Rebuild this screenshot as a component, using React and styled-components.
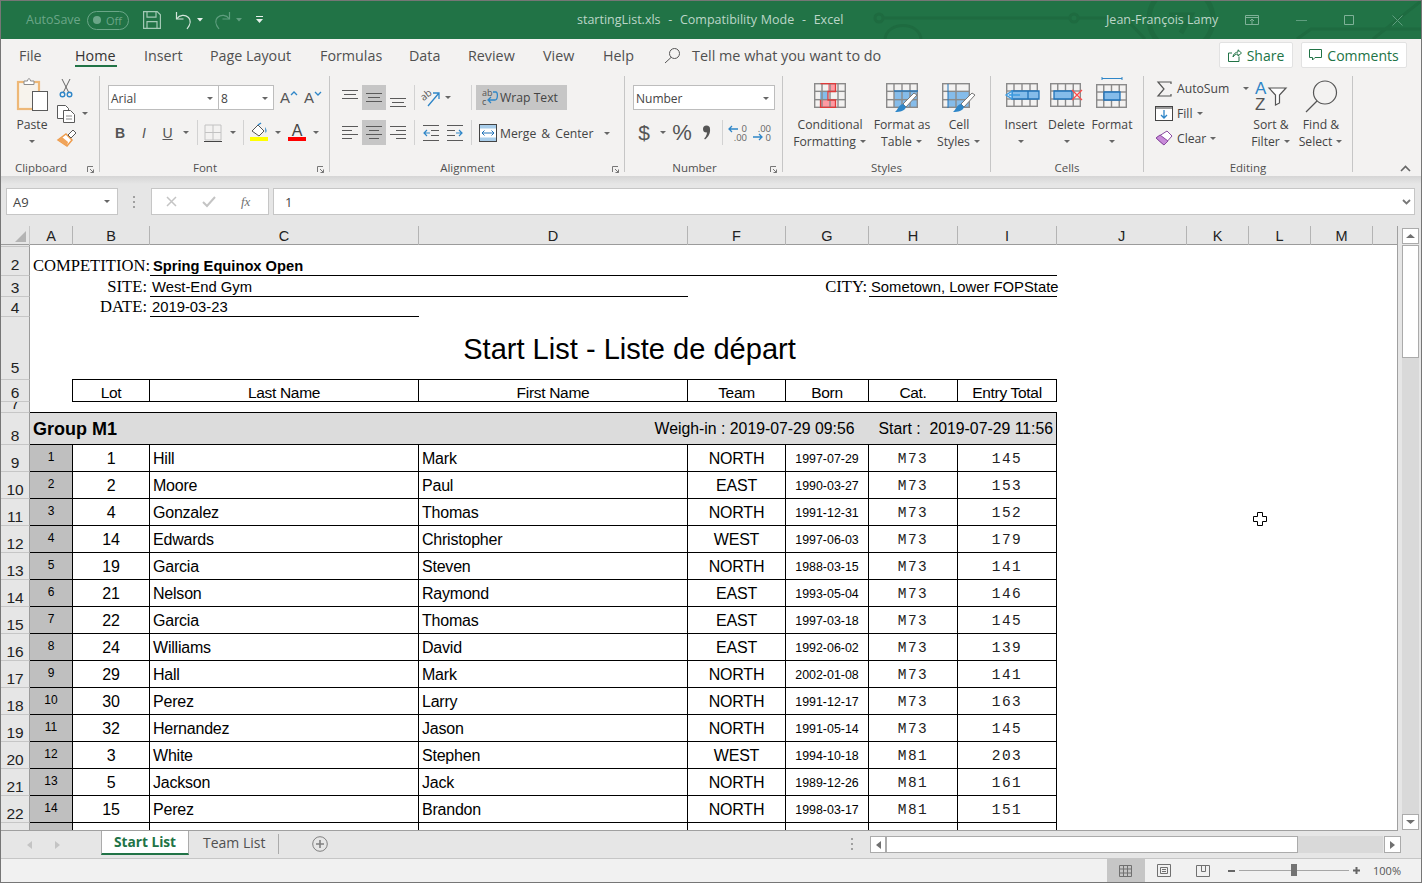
import styled, { createGlobalStyle } from 'styled-components'

const UI = `"Open Sans", "Noto Sans", sans-serif`
const ARIAL = `"Liberation Sans", Arial, sans-serif`

const GlobalStyle = createGlobalStyle`
  html, body { margin: 0; height: 100%; overflow: hidden; background: #fff; }
  #root { height: 100%; }
  * { box-sizing: border-box; }
  svg { display: block; flex: none; overflow: visible; }
`

const Window = styled.div`
  position: relative;
  height: 100vh;
  border: 1px solid #767676;
  display: flex;
  flex-direction: column;
  overflow: hidden;
  font-family: ${UI};
  background: #f3f2f1;
`

/* ---------- title bar ---------- */
const TitleBar = styled.div`
  position: relative;
  height: 38px;
  flex: none;
  background: #217346;
  display: flex;
  align-items: center;
  font-size: 12.5px;
  color: #bcd6c8;
`
const Circuit = styled.svg`
  position: absolute;
  left: 0;
  top: 0;
  overflow: hidden;
`
const QuickAccess = styled.div`
  position: relative;
  display: flex;
  flex: none;
  align-items: center;
  padding-left: 25px;
  width: 576px;
`
const AutoSave = styled.span`
  color: #6ba688;
  width: 61px;
  margin-top: -2px;
`
const Toggle = styled.span`
  width: 42px;
  height: 19px;
  border: 1px solid #6ba688;
  border-radius: 10px;
  display: flex;
  align-items: center;
  justify-content: space-between;
  padding: 0 6px 0 5px;
  color: #6ba688;
  font-size: 11px;
  margin-right: 14px;
  &::before {
    content: '';
    width: 8px;
    height: 8px;
    border-radius: 50%;
    background: #6ba688;
  }
`
const QuickTool = styled.span`
  width: ${({ $w }) => $w}px;
  display: flex;
  justify-content: center;
  align-items: center;
`
const DocTitle = styled.span`
  position: relative;
  flex: none;
  width: 529px;
  margin-top: -2px;
  white-space: pre;
  word-spacing: 0.6px;
`
const UserName = styled.span`
  position: relative;
  flex: none;
  width: 139px;
  margin-top: -2px;
`
const DisplayBtn = styled.span`
  position: relative;
  flex: none;
  width: 14px;
  margin-right: 18px;
`
const WindowBtn = styled.span`
  position: relative;
  flex: none;
  width: 48px;
  display: flex;
  justify-content: center;
`

/* ---------- ribbon tabs ---------- */
const TabsRow = styled.div`
  height: 33px;
  flex: none;
  display: flex;
  align-items: center;
  padding-left: 18px;
  font-size: 14.3px;
  color: #505050;
`
const RibbonTab = styled.span`
  position: relative;
  width: ${({ $w }) => $w}px;
  flex: none;
  color: ${({ $active }) => ($active ? '#333' : '#505050')};
  line-height: 32px;
  white-space: nowrap;
  &::after {
    content: '';
    display: ${({ $active }) => ($active ? 'block' : 'none')};
    position: absolute;
    left: 0;
    width: 42px;
    bottom: 5px;
    height: 2px;
    background: #217346;
  }
`
const TellMe = styled.span`
  display: flex;
  align-items: center;
  gap: 11px;
  white-space: nowrap;
  font-size: 14.4px;
  margin-top: -1px;
`
const Spacer = styled.span`
  flex: 1;
`
const ShareButton = styled.span`
  width: ${({ $w }) => $w}px;
  height: 26px;
  margin-right: ${({ $mr }) => $mr}px;
  margin-top: -1px;
  background: #fff;
  border: 1px solid #e2e2e2;
  border-radius: 2px;
  color: #217346;
  display: flex;
  align-items: center;
  justify-content: center;
  gap: 5px;
  font-size: 14px;
  font-weight: 500;
`

/* ---------- ribbon ---------- */
const Ribbon = styled.div`
  height: 104px;
  flex: none;
  display: flex;
  padding-top: 4px;
  padding-bottom: 4px;
  position: relative;
  font-size: 12.2px;
  color: #444;
`
const Group = styled.section`
  width: ${({ $w }) => $w}px;
  flex: none;
  border-right: 1px solid #c6c6c6;
  display: grid;
  grid-template-rows: 84px 12px;
  position: relative;
`
const GroupBody = styled.div`
  display: flex;
  padding-left: ${({ $pl }) => $pl || 0}px;
  align-items: flex-start;
`
const GroupLabel = styled.div`
  display: flex;
  justify-content: center;
  padding-right: ${({ $pr }) => $pr || 0}px;
  line-height: 16px;
  height: 12px;
  font-size: 11.5px;
  color: #505050;
`
const Launcher = styled.span`
  position: absolute;
  right: 5px;
  bottom: -1px;
`
const TwoRows = styled.div`
  display: flex;
  flex-direction: column;
  gap: 10px;
  padding-top: 9px;
`
const ToolRow = styled.div`
  display: flex;
  height: 25px;
  align-items: center;
`
const Tool = styled.span`
  width: ${({ $w }) => $w}px;
  height: 25px;
  margin-left: ${({ $ml }) => $ml || 0}px;
  flex: none;
  display: flex;
  align-items: center;
  justify-content: center;
  background: ${({ $on }) => ($on ? '#c6c6c6' : 'transparent')};
`
const Caret = styled.span`
  width: ${({ $w }) => $w || 8}px;
  height: ${({ $h }) => $h || 10}px;
  flex: none;
  margin-left: ${({ $ml }) => $ml || 0}px;
  display: inline-flex;
  align-items: center;
  justify-content: center;
  &::before {
    content: '';
    border-left: 3px solid transparent;
    border-right: 3px solid transparent;
    border-top: 3px solid #666;
  }
`
const VSep = styled.span`
  width: 1px;
  height: 25px;
  flex: none;
  margin-left: ${({ $ml }) => $ml || 0}px;
  background: #d2d2d2;
`
const Combo = styled.span`
  width: ${({ $w }) => $w}px;
  height: 25px;
  flex: none;
  margin-left: ${({ $ml }) => $ml || 0}px;
  background: #fff;
  border: 1px solid #bdbdbd;
  display: flex;
  align-items: center;
  justify-content: space-between;
  padding: 1px 4px 0 2px;
  font-size: 12px;
  color: #444;
`
const WrapButton = styled.span`
  width: 91px;
  height: 25px;
  margin-left: 4px;
  background: #c6c6c6;
  display: flex;
  align-items: center;
  padding-left: 5px;
  gap: 1px;
  white-space: nowrap;
`
const MergeButton = styled.span`
  display: flex;
  align-items: center;
  margin-left: 7px;
  gap: 3px;
  white-space: nowrap;
  word-spacing: 1.9px;
  padding-top: 1px;
`
const LargeButton = styled.div`
  width: ${({ $w }) => $w}px;
  flex: none;
  display: flex;
  flex-direction: column;
  align-items: center;
  line-height: 17px;
  text-align: center;
  white-space: nowrap;
`
const LargeIcon = styled.div`
  height: 40px;
  display: flex;
  align-items: flex-start;
  padding-top: ${({ $pt }) => $pt || 0}px;
`
const LabelLine = styled.span`
  display: flex;
  align-items: center;
  height: 17px;
  gap: 3px;
`
const SmallColumn = styled.div`
  width: ${({ $w }) => $w}px;
  flex: none;
  margin-left: ${({ $ml }) => $ml || 0}px;
  display: flex;
  flex-direction: column;
`
const SmallRow = styled.div`
  height: 25px;
  display: flex;
  align-items: center;
  gap: 4px;
  white-space: nowrap;
`
const Collapse = styled.span`
  position: absolute;
  right: 10px;
  bottom: 4px;
`

/* ---------- formula bar ---------- */
const FormulaBar = styled.div`
  height: 50px;
  flex: none;
  padding: 12px 6px 11px 5px;
  display: flex;
  background: linear-gradient(#d5d5d5, #e6e6e6 8px);
  font-size: 13px;
  color: #444;
`
const FormulaBox = styled.div`
  width: ${({ $w }) => ($w ? `${$w}px` : 'auto')};
  flex: ${({ $w }) => ($w ? 'none' : '1')};
  margin-left: ${({ $ml }) => $ml || 0}px;
  background: #fff;
  border: 1px solid #c6c6c6;
  display: flex;
  align-items: center;
  justify-content: space-between;
  padding: 0 ${({ $pr }) => $pr || 0}px 0 ${({ $pl }) => $pl || 0}px;
`
const Grip = styled.span`
  width: 2px;
  height: 12px;
  margin-left: 15px;
  background: repeating-linear-gradient(#a0a0a0 0 2px, transparent 2px 5px);
  align-self: center;
`

/* ---------- sheet ---------- */
const COLUMNS = '29px 43px 77px 269px 269px 98px 83px 89px 99px 1fr'

const SheetArea = styled.div`
  flex: 1;
  min-height: 0;
  display: flex;
  background: #e6e6e6;
`
const Sheet = styled.div`
  width: 1397px;
  flex: none;
  display: flex;
  flex-direction: column;
  overflow: hidden;
  border-right: 1px solid #a0a0a0;
  border-bottom: 1px solid #a0a0a0;
`
const HeaderRow = styled.div`
  height: 19px;
  flex: none;
  display: grid;
  grid-template-columns: 29px 43px 77px 269px 269px 98px 83px 89px 99px 130px 62px 62px 62px 1fr;
  background: #e6e6e6;
  border-bottom: 1px solid #9b9b9b;
  font: 14.5px/20px ${ARIAL};
  color: #222;
`
const Corner = styled.div`
  display: flex;
  justify-content: flex-end;
  padding: 5px 3px 0 0;
  border-right: 1px solid #c6c6c6;
`
const ColHead = styled.div`
  text-align: center;
  border-right: ${({ $last }) => ($last ? '0' : '1px solid #b4b4b4')};
`
const Rows = styled.div`
  flex: 1;
  min-height: 0;
  background: #fff;
  overflow: hidden;
`
const Row = styled.div`
  height: ${({ $h }) => $h}px;
  display: grid;
  grid-template-columns: ${COLUMNS};
  grid-template-rows: ${({ $h }) => $h}px;
  font: 16px/${({ $h }) => $h}px ${ARIAL};
  letter-spacing: -0.22px;
  color: #000;
  overflow: ${({ $open }) => ($open ? 'visible' : 'hidden')};
`
const RowHead = styled.div`
  background: #e6e6e6;
  border-right: 1px solid #9b9b9b;
  border-bottom: 1px solid #c6c6c6;
  display: flex;
  align-items: flex-end;
  justify-content: center;
  padding-bottom: ${({ $lift }) => $lift || 0}px;
  font: 15.5px/16px ${ARIAL};
  letter-spacing: 0;
  color: #222;
  overflow: hidden;
`
const MetaLabel = styled.div`
  grid-column: ${({ $span }) => $span};
  text-align: right;
  font-family: "Liberation Serif", "Times New Roman", serif;
  font-size: 16.6px;
  letter-spacing: 0;
  padding-right: ${({ $pr }) => $pr}px;
  align-self: end;
  line-height: 20px;
  white-space: nowrap;
`
const MetaValue = styled.div`
  grid-column: ${({ $span }) => $span};
  border-bottom: 1px solid #000;
  padding-left: ${({ $pl }) => $pl || 2}px;
  font-weight: ${({ $bold }) => ($bold ? 700 : 400)};
  font-size: ${({ $bold }) => ($bold ? '14.7px' : '14.8px')};
  letter-spacing: 0;
  line-height: 18px;
  white-space: nowrap;
  height: 100%;
  display: flex;
  align-items: flex-end;
`
const TitleCell = styled.div`
  grid-column: 2 / 11;
  text-align: center;
  padding-right: 168px;
  font-size: 29.05px;
  line-height: 65px;
  letter-spacing: 0;
`
const ColumnTitle = styled.div`
  text-align: center;
  border-top: 1px solid #000;
  border-bottom: 1px solid #000;
  border-right: 1px solid #000;
  border-left: ${({ $first }) => ($first ? '1px solid #000' : '0')};
  margin-left: ${({ $first }) => ($first ? '-1px' : '0')};
  margin-top: -1px;
  line-height: 25px;
  height: 23px;
  font-size: 15.5px;
  letter-spacing: -0.3px;
  overflow: hidden;
`
const GroupBand = styled.div`
  grid-column: 2 / 10;
  background: #dcdcdc;
  border-bottom: 1px solid #000;
  border-right: 1px solid #000;
  display: flex;
  justify-content: space-between;
  padding: 0 3px;
  letter-spacing: 0;
`
const GroupName = styled.span`
  font-weight: 700;
  font-size: 18px;
  line-height: 32px;
`
const GroupTimes = styled.span`
  display: flex;
  gap: 24px;
  line-height: 31px;
  font-size: 15.8px;
  white-space: pre;
`
const Cell = styled.div`
  border-right: 1px solid #000;
  border-bottom: 1px solid #000;
  text-align: ${({ $left }) => ($left ? 'left' : 'center')};
  padding-left: ${({ $left }) => ($left ? '3px' : '0')};
  overflow: hidden;
  white-space: nowrap;
`
const OrderCell = styled(Cell)`
  background: #bfbfbf;
  font-size: 12px;
  letter-spacing: 0;
  line-height: 25px;
`
const DateCell = styled(Cell)`
  font-size: 12.4px;
  letter-spacing: 0;
  line-height: 28px;
`
const MonoCell = styled(Cell)`
  font-family: "Liberation Mono", "Courier New", monospace;
  font-size: 14.5px;
  letter-spacing: 1.5px;
  line-height: 29px;
  color: #222;
`
const RowFill = styled.div`
  grid-column: ${({ $span }) => $span};
  border-bottom: 1px solid #000;
`

/* ---------- scrollbars ---------- */
const VScroll = styled.div`
  flex: 1;
  display: flex;
  flex-direction: column;
  padding: 2px 3px 1px 4px;
`
const ScrollBtn = styled.div`
  width: ${({ $w }) => $w || 17}px;
  height: ${({ $h }) => $h || 16}px;
  flex: none;
  background: #fff;
  border: 1px solid #ababab;
  display: flex;
  align-items: center;
  justify-content: center;
`
const VThumb = styled.div`
  height: 113px;
  flex: none;
  margin-top: 1px;
  background: #fff;
  border: 1px solid #ababab;
`
const VTrack = styled.div`
  flex: 1;
  background: #d9d9d9;
`
const SheetTabs = styled.div`
  height: 28px;
  flex: none;
  background: #e6e6e6;
  border-bottom: 1px solid #c6c6c6;
  display: flex;
  align-items: flex-start;
  font-size: 14px;
`
const NavArrows = styled.div`
  width: 100px;
  height: 27px;
  display: flex;
  align-items: center;
  gap: 23px;
  padding-left: 26px;
  flex: none;
`
const ActiveTab = styled.div`
  width: 88px;
  height: 24px;
  background: #fff;
  border-left: 1px solid #ababab;
  border-right: 1px solid #ababab;
  border-bottom: 2px solid #217346;
  color: #217346;
  font-weight: 700;
  text-align: center;
  line-height: 21px;
  font-size: 13.7px;
`
const IdleTab = styled.div`
  width: 90px;
  height: 20px;
  margin-top: 3px;
  border-right: 1px solid #ababab;
  padding-left: 14px;
  line-height: 18px;
  color: #505050;
`
const AddSheet = styled.div`
  margin: 5px 0 0 33px;
`
const Dots = styled.div`
  margin: 7px 0 0 auto;
  width: 2px;
  height: 12px;
  background: repeating-linear-gradient(#a0a0a0 0 2px, transparent 2px 5px);
`
const HScroll = styled.div`
  width: 530px;
  margin: 5px 21px 0 17px;
  height: 17px;
  display: flex;
`
const HThumb = styled.div`
  width: 412px;
  flex: none;
  background: #fff;
  border: 1px solid #ababab;
`
const HTrack = styled.div`
  width: 85px;
  flex: none;
  background: #d9d9d9;
  margin-right: 1px;
`
const StatusBar = styled.div`
  height: 23px;
  flex: none;
  background: #f1f1f1;
  display: flex;
  justify-content: flex-end;
  align-items: center;
  padding-right: 20px;
  font-size: 11px;
  color: #555;
`
const ViewBtn = styled.div`
  width: 38.5px;
  height: 100%;
  display: flex;
  align-items: center;
  justify-content: center;
  background: ${({ $on }) => ($on ? '#c6c6c6' : 'transparent')};
`
const ZoomSlider = styled.div`
  position: relative;
  width: 110px;
  height: 1px;
  margin: 0 4px;
  background: #a6a6a6;
  &::after {
    content: '';
    position: absolute;
    left: 52px;
    top: -6px;
    width: 6px;
    height: 12px;
    background: #737373;
  }
`
const ZoomText = styled.span`
  margin-left: 13px;
`
const CellCursor = styled.svg`
  position: absolute;
  left: 1251px;
  top: 510px;
`

/* ---------- drawings ---------- */
const G = '#5a5a5a'
const BLUE = '#2e86c8'

const LinesIcon = ({ lines }) => (
  <svg width="16" height="20" viewBox="0 0 16 20" stroke={G} strokeWidth="1">
    {lines.map(([a, b, y]) => <line key={y} x1={a} x2={b} y1={y + 0.5} y2={y + 0.5} />)}
  </svg>
)
const TableGlyph = ({ x = 0, y = 0, w = 32, h = 24, cols = 4, rows = 3 }) => (
  <g stroke="#8a8a8a" strokeWidth="1.4" fill="none">
    <rect x={x + 0.7} y={y + 0.7} width={w - 1.4} height={h - 1.4} />
    {Array.from({ length: cols - 1 }, (_, i) => (
      <line key={i} x1={x + (w * (i + 1)) / cols} x2={x + (w * (i + 1)) / cols} y1={y} y2={y + h} />
    ))}
    {Array.from({ length: rows - 1 }, (_, i) => (
      <line key={i} y1={y + (h * (i + 1)) / rows} y2={y + (h * (i + 1)) / rows} x1={x} x2={x + w} />
    ))}
  </g>
)
const Brush = ({ x, y }) => (
  <g transform={`translate(${x} ${y})`}>
    <path d="M19 1l3 2-11 12-3-3z" fill="#fff" stroke="#777" />
    <path d="M8 12l3 3c-1 4-6 5-11 5 3-2 3-7 8-8z" fill="#2e86c8" />
  </g>
)

const SaveIcon = () => (
  <svg width="18" height="18" viewBox="0 0 18 18" fill="none" stroke="#a3c9b5" strokeWidth="1.2">
    <path d="M.6.6h13.6l3.2 3.2v13.6H.6z" />
    <path d="M4 .6v5.6h9V.6M4 17.4v-6.8h10v6.8" />
  </svg>
)
const UndoIcon = ({ color, flip }) => (
  <svg width="17" height="19" viewBox="0 0 17 19" fill="none" stroke={color} strokeWidth="1.2" style={flip ? { transform: 'scaleX(-1)' } : undefined}>
    <path d="M1.5 1v7h7" />
    <path d="M1.5 8C5 3.5 10 3.5 13.5 6.5c3 3 2 7-1.5 11.5" />
  </svg>
)
const WhiteCaret = () => (
  <svg width="6" height="4" viewBox="0 0 6 4" fill="#e6f0eb"><path d="M0 0h6L3 3.5z" /></svg>
)
const PasteIcon = () => (
  <svg width="33" height="36" viewBox="0 0 33 36">
    <rect x="2" y="4" width="21" height="27" fill="#f7f3ec" stroke="#eeb877" strokeWidth="2.2" />
    <path d="M8 5V3h3.5c0-3 3-3 3 0H18v3.5H8z" fill="#fff" stroke="#8c8c8c" />
    <rect x="16.5" y="13.5" width="15" height="19" fill="#fff" stroke="#5a5a5a" />
  </svg>
)
const CutIcon = () => (
  <svg width="14" height="19" viewBox="0 0 14 19" fill="none">
    <path d="M3 0l6.5 13M11 0L4.5 13" stroke="#666" />
    <circle cx="3.5" cy="15.5" r="2.3" stroke="#2e86c8" strokeWidth="1.4" />
    <circle cx="10.5" cy="15.5" r="2.3" stroke="#2e86c8" strokeWidth="1.4" />
  </svg>
)
const CopyIcon = () => (
  <svg width="18" height="18" viewBox="0 0 18 18" fill="#fff" stroke="#5a5a5a">
    <path d="M.5.5h8l3 3v10h-11z" />
    <path d="M6.5 5.5h7l4 4v8h-11z" />
    <path d="M9 11h6M9 14h6" stroke="#8a8a8a" />
  </svg>
)
const PainterIcon = () => (
  <svg width="19" height="17" viewBox="0 0 19 17">
    <path d="M9 4l6 6-5 6-9-6z" fill="#fff" stroke="#ee9c4c" strokeWidth="1.5" />
    <path d="M1 10l9 6 1-4-6-5z" fill="#f0a45a" />
    <path d="M11 5l5-5 3 3-5 5z" fill="#fff" stroke="#5a5a5a" />
  </svg>
)
const Launch = () => (
  <svg width="7" height="7" viewBox="0 0 7 7" fill="none" stroke="#777">
    <path d="M.5 6V.5H6M3 3l3.5 3.5M3.5 6.5h3v-3" />
  </svg>
)
const BigA = styled.span`
  font: 15px/1 ${ARIAL};
  color: #555;
`
const GrowIcon = ({ down }) => (
  <svg width="8" height="5" viewBox="0 0 8 5" fill="none" stroke={BLUE} strokeWidth="1.3" style={{ alignSelf: 'flex-start', marginTop: 6 }}>
    <path d={down ? 'M1 1l3 3 3-3' : 'M1 4l3-3 3 3'} />
  </svg>
)
const LetterTool = styled.span`
  font: ${({ $style }) => $style} ${ARIAL};
  color: #555;
  text-decoration: ${({ $under }) => ($under ? 'underline' : 'none')};
`
const BordersIcon = () => (
  <svg width="18" height="18" viewBox="0 0 18 18" fill="none">
    <path d="M1 1h16v15H1zM9 1v15M1 8.5h16" stroke="#c2c2c2" />
    <path d="M0 17.5h18" stroke="#444" />
  </svg>
)
const FillIcon = () => (
  <svg width="18" height="19" viewBox="0 0 18 19" fill="none">
    <path d="M2 8l6-6 6 6-5 5z" stroke="#555" fill="#fff" />
    <path d="M8 2l3-2" stroke={BLUE} strokeWidth="1.5" />
    <path d="M15 4c2 3 2 5 .5 6z" fill={BLUE} />
    <rect y="14" width="18" height="4" fill="#ffff00" />
  </svg>
)
const FontColorIcon = () => (
  <svg width="18" height="19" viewBox="0 0 18 19">
    <text x="9" y="13" fontFamily={ARIAL} fontSize="16" fill="#444" textAnchor="middle">A</text>
    <rect y="14" width="18" height="4" fill="#ff0000" />
  </svg>
)
const OrientIcon = () => (
  <svg width="19" height="19" viewBox="0 0 19 19">
    <text x="0" y="11" fontFamily={UI} fontSize="10" fill="#555" transform="rotate(-38 4 10)">ab</text>
    <path d="M6 18L17 5M11 5h6v6" fill="none" stroke={BLUE} strokeWidth="1.3" />
  </svg>
)
const IndentIcon = ({ flip }) => (
  <svg width="16" height="16" viewBox="0 0 16 16" fill="none" stroke={G} style={flip ? { transform: 'scaleX(-1)' } : undefined}>
    <path d="M0 .5h16M8 5.5h8M8 10.5h8M0 15.5h16" />
    <path d="M7 8H1M4 5L1 8l3 3" stroke={BLUE} strokeWidth="1.2" />
  </svg>
)
const WrapIcon = () => (
  <svg width="18" height="19" viewBox="0 0 18 19">
    <text x="1" y="8" fontFamily={UI} fontSize="9" fill="#555">ab</text>
    <text x="1" y="17" fontFamily={UI} fontSize="9" fill="#555">c</text>
    <path d="M12 4h3c2 0 2 8-1 8H8M10 9l-3 3 3 3" fill="none" stroke={BLUE} strokeWidth="1.3" />
  </svg>
)
const MergeIcon = () => (
  <svg width="18" height="18" viewBox="0 0 18 18" fill="none">
    <rect x=".5" y=".5" width="17" height="17" stroke="#444" fill="#fff" />
    <path d="M1 1h16v3.5H1zM1 13.5h16V17H1z" fill="#a8cdea" />
    <path d="M3 9h12M5.5 6.5L3 9l2.5 2.5M12.5 6.5L15 9l-2.5 2.5" stroke="#1f72b8" />
  </svg>
)
const CommaIcon = () => (
  <svg width="9" height="15" viewBox="0 0 9 15" fill="#555">
    <circle cx="4.5" cy="4" r="3.5" />
    <path d="M5 4h3c.5 4-1.5 8-5 10.5l-.8-1C4.5 11.5 5.5 8 5 4z" />
  </svg>
)
const Decimal = ({ top, bottom, toRight }) => (
  <svg width="18" height="18" viewBox="0 0 18 18">
    <text x="18" y="8" fontFamily={UI} fontSize="9.5" fill="#666" textAnchor="end">{top}</text>
    <text x="18" y="17" fontFamily={UI} fontSize="9.5" fill="#666" textAnchor="end">{bottom}</text>
    <path d={toRight ? 'M0 13h9M6 10l3 3-3 3' : 'M9 4H0M3 1L0 4l3 3'} transform={toRight ? undefined : 'translate(0 1)'} fill="none" stroke={BLUE} strokeWidth="1.3" />
  </svg>
)
const CondIcon = () => (
  <svg width="32" height="25" viewBox="0 0 32 25">
    <path d="M6 0h16v8h-8v-8zM6 17h16v8H6z" fill="#ff9aa2" />
    <rect x="6" y="8.5" width="8" height="8" fill="#85bcea" />
    <TableGlyph h={25} />
    <path d="M6.5 0.7h15v7.8h-7.5v8.5h7.5v7.3h-15v-7.3" fill="none" stroke="#e03a3a" strokeWidth="1.3" />
  </svg>
)
const TableIcon = () => (
  <svg width="33" height="33" viewBox="0 0 33 33">
    <path d="M8 8h24v16H8z" fill="#85bcea" />
    <TableGlyph h={25} />
    <path d="M8 8h24" stroke="#1f72b8" strokeWidth="1.4" />
    <Brush x={9} y={9} />
  </svg>
)
const StylesIcon = () => (
  <svg width="34" height="33" viewBox="0 0 34 33">
    <path d="M6 8h22v16H6z" fill="#85bcea" />
    <TableGlyph w={28} h={25} cols={2} />
    <path d="M6 1v24" stroke="#1f72b8" />
    <Brush x={11} y={9} />
  </svg>
)
const InsertIcon = () => (
  <svg width="35" height="25" viewBox="0 0 35 25">
    <TableGlyph x={2} w={32} />
    <path d="M8 8h27v8H8z" fill="#85bcea" stroke="#1f72b8" strokeWidth="1.3" />
    <path d="M24 8v8" stroke="#1f72b8" strokeWidth="1.3" />
    <path d="M16 12H5M8 8l-6 4 6 4z" fill="#cfe4f6" stroke="#3c9ae0" strokeWidth="1.3" />
  </svg>
)
const DeleteIcon = () => (
  <svg width="34" height="25" viewBox="0 0 34 25">
    <TableGlyph w={31} />
    <path d="M4 8h18v8H4z" fill="#85bcea" stroke="#1f72b8" strokeWidth="1.3" />
    <path d="M22 7l10 10M32 7L22 17" stroke="#ff4a4a" strokeWidth="1.3" />
  </svg>
)
const FormatIcon = () => (
  <svg width="32" height="32" viewBox="0 0 32 32">
    <path d="M6 1.5h20M6 0v3M26 0v3" stroke="#2e86c8" />
    <TableGlyph y={7} w={31} />
    <path d="M8 15h16v8H8z" fill="#85bcea" stroke="#1f72b8" strokeWidth="1.3" />
  </svg>
)
const SumIcon = () => (
  <svg width="17" height="16" viewBox="0 0 17 16" fill="none" stroke="#555" strokeWidth="1.2">
    <path d="M15 3V1H2l6 7-6 7h13v-2" />
  </svg>
)
const FillDownIcon = () => (
  <svg width="18" height="15" viewBox="0 0 18 15" fill="none">
    <rect x=".5" y=".5" width="17" height="14" stroke="#444" fill="#fff" />
    <path d="M1 1h16v2H1z" fill="#9a9a9a" />
    <path d="M9 4v8M6 9l3 3 3-3" stroke={BLUE} strokeWidth="1.3" />
  </svg>
)
const EraserIcon = () => (
  <svg width="18" height="17" viewBox="0 0 18 17">
    <path d="M12 1l5 5-8 9-8-7z" fill="#fff" stroke="#8a4ba0" />
    <path d="M5 5l8 6-4 4-8-7z" fill="#c78ad8" stroke="#8a4ba0" />
  </svg>
)
const SortIcon = () => (
  <svg width="32" height="31" viewBox="0 0 32 31">
    <text x="0" y="14" fontFamily={ARIAL} fontSize="17" fill={BLUE}>A</text>
    <text x="0" y="30" fontFamily={ARIAL} fontSize="17" fill="#555">Z</text>
    <path d="M14 8h17l-6.5 7v8l-4 2V15z" fill="#fff" stroke="#555" strokeWidth="1.2" />
  </svg>
)
const FindIcon = () => (
  <svg width="33" height="33" viewBox="0 0 33 33" fill="none" stroke="#555" strokeWidth="1.2">
    <circle cx="20" cy="12.5" r="11.5" />
    <path d="M12 21L1 32" />
  </svg>
)
const ChevronUp = () => (
  <svg width="11" height="7" viewBox="0 0 11 7" fill="none" stroke="#666" strokeWidth="1.6"><path d="M1 6l4.5-4.5L10 6" /></svg>
)
const SmallDown = () => (
  <svg width="9" height="6" viewBox="0 0 9 6" fill="none" stroke="#777" strokeWidth="1.8"><path d="M1 1l3.5 3.5L8 1" /></svg>
)
const ScrollArrow = ({ d }) => (
  <svg width="9" height="5" viewBox="0 0 9 5" fill="#707070"><path d={d} /></svg>
)
const SideArrow = ({ flip, color = '#707070' }) => (
  <svg width="5" height="8" viewBox="0 0 5 8" fill={color} style={flip ? { transform: 'scaleX(-1)' } : undefined}><path d="M0 0l5 4-5 4z" /></svg>
)

/* ---------- data ---------- */
const lifters = [
  [1, 1, 'Hill', 'Mark', 'NORTH', '1997-07-29', 'M73', 145],
  [2, 2, 'Moore', 'Paul', 'EAST', '1990-03-27', 'M73', 153],
  [3, 4, 'Gonzalez', 'Thomas', 'NORTH', '1991-12-31', 'M73', 152],
  [4, 14, 'Edwards', 'Christopher', 'WEST', '1997-06-03', 'M73', 179],
  [5, 19, 'Garcia', 'Steven', 'NORTH', '1988-03-15', 'M73', 141],
  [6, 21, 'Nelson', 'Raymond', 'EAST', '1993-05-04', 'M73', 146],
  [7, 22, 'Garcia', 'Thomas', 'EAST', '1997-03-18', 'M73', 145],
  [8, 24, 'Williams', 'David', 'EAST', '1992-06-02', 'M73', 139],
  [9, 29, 'Hall', 'Mark', 'NORTH', '2002-01-08', 'M73', 141],
  [10, 30, 'Perez', 'Larry', 'NORTH', '1991-12-17', 'M73', 163],
  [11, 32, 'Hernandez', 'Jason', 'NORTH', '1991-05-14', 'M73', 145],
  [12, 3, 'White', 'Stephen', 'WEST', '1994-10-18', 'M81', 203],
  [13, 5, 'Jackson', 'Jack', 'NORTH', '1989-12-26', 'M81', 161],
  [14, 15, 'Perez', 'Brandon', 'NORTH', '1998-03-17', 'M81', 151],
]
const columnTitles = ['Lot', 'Last Name', 'First Name', 'Team', 'Born', 'Cat.', 'Entry Total']
const colLetters = ['A', 'B', 'C', 'D', 'F', 'G', 'H', 'I', 'J', 'K', 'L', 'M']
const tabs = [['File', 56], ['Home', 69], ['Insert', 66], ['Page Layout', 110], ['Formulas', 89], ['Data', 59], ['Review', 75], ['View', 60], ['Help', 61]]

function TitleStrip() {
  return (
    <TitleBar>
      <Circuit width="1420" height="38" viewBox="0 0 1420 38" fill="none" stroke="#1e6b40" strokeWidth="3">
        <circle cx="878" cy="17" r="4" />
        <path d="M882 17h188M1078 17h46l20 21M884 38c2-18 34-18 36 0" />
        <circle cx="1073" cy="17" r="4" />
        <circle cx="1180" cy="18" r="32" strokeWidth="5" />
        <path d="M1168 14h22l-10 18" strokeWidth="5" />
        <path d="M1296 38l14-10h110M1372 38l48-38" />
      </Circuit>
      <QuickAccess>
        <AutoSave>AutoSave</AutoSave>
        <Toggle>Off</Toggle>
        <QuickTool $w={18}><SaveIcon /></QuickTool>
        <QuickTool $w={14} />
        <QuickTool $w={17}><UndoIcon color="#d4e5db" /></QuickTool>
        <QuickTool $w={16}><WhiteCaret /></QuickTool>
        <QuickTool $w={6} />
        <QuickTool $w={17}><UndoIcon color="#5f9e7f" flip /></QuickTool>
        <QuickTool $w={16}><svg width="6" height="4" viewBox="0 0 6 4" fill="#5f9e7f"><path d="M0 0h6L3 3.5z" /></svg></QuickTool>
        <QuickTool $w={24}>
          <svg width="7" height="8" viewBox="0 0 7 8" fill="#e6f0eb"><path d="M0 0h7v1H0zM0 3h7L3.5 7z" /></svg>
        </QuickTool>
      </QuickAccess>
      <DocTitle>startingList.xls  -  Compatibility Mode  -  Excel</DocTitle>
      <UserName>Jean-François Lamy</UserName>
      <DisplayBtn>
        <svg width="14" height="10" viewBox="0 0 14 10" fill="none" stroke="#7fb198"><path d="M.5.5h13v9H.5zM.5 2.5h13M7 9V4.5M5 6l2-2 2 2" /></svg>
      </DisplayBtn>
      <WindowBtn>
        <svg width="11" height="1" viewBox="0 0 11 1"><path d="M0 .5h11" stroke="#5f9e7f" /></svg>
      </WindowBtn>
      <WindowBtn>
        <svg width="10" height="10" viewBox="0 0 10 10" fill="none" stroke="#7fb198"><path d="M.5.5h9v9h-9z" /></svg>
      </WindowBtn>
      <WindowBtn>
        <svg width="11" height="11" viewBox="0 0 11 11" fill="none" stroke="#5f9e7f"><path d="M.5.5l10 10M10.5.5l-10 10" /></svg>
      </WindowBtn>
    </TitleBar>
  )
}

function RibbonTabs() {
  return (
    <TabsRow>
      {tabs.map(([name, width]) => (
        <RibbonTab key={name} $w={width} $active={name === 'Home'}>{name}</RibbonTab>
      ))}
      <TellMe>
        <svg width="17" height="17" viewBox="0 0 17 17" fill="none" stroke="#555"><circle cx="10.5" cy="6.5" r="5" /><path d="M7 10.5L1 16" /></svg>
        Tell me what you want to do
      </TellMe>
      <Spacer />
      <ShareButton $w={74} $mr={8}>
        <svg width="14" height="13" viewBox="0 0 14 13" fill="none" stroke="#217346"><path d="M11 7.5v5H.5V4H4M5 8c0-3 3-5 5-5V.8L13.5 4 10 7V5C8 5 6 6 5 8z" /></svg>
        Share
      </ShareButton>
      <ShareButton $w={106} $mr={14}>
        <svg width="13" height="12" viewBox="0 0 13 12" fill="none" stroke="#217346"><path d="M.5.5h12v8H6L3.5 11V8.5h-3z" /></svg>
        Comments
      </ShareButton>
    </TabsRow>
  )
}

function RibbonGroups() {
  return (
    <Ribbon>
      <Group $w={99}>
        <GroupBody $pl={13}>
          <LargeButton $w={36}>
            <LargeIcon $pt={2}><PasteIcon /></LargeIcon>
            <LabelLine>Paste</LabelLine>
            <LabelLine><Caret /></LabelLine>
          </LargeButton>
          <SmallColumn $w={40} $ml={7}>
            <SmallRow><Tool $w={18}><CutIcon /></Tool></SmallRow>
            <SmallRow><Tool $w={18}><CopyIcon /></Tool><Caret $ml={2} /></SmallRow>
            <SmallRow><Tool $w={18}><PainterIcon /></Tool></SmallRow>
          </SmallColumn>
        </GroupBody>
        <GroupLabel $pr={18}>Clipboard</GroupLabel>
        <Launcher><Launch /></Launcher>
      </Group>

      <Group $w={230}>
        <GroupBody $pl={8}>
          <TwoRows>
            <ToolRow>
              <Combo $w={111}>Arial<Caret /></Combo>
              <Combo $w={56} $ml={-1}>8<Caret /></Combo>
              <Tool $w={26} $ml={2}><BigA>A</BigA><GrowIcon /></Tool>
              <Tool $w={22}><BigA>A</BigA><GrowIcon down /></Tool>
            </ToolRow>
            <ToolRow>
              <Tool $w={24}><LetterTool $style="700 14px">B</LetterTool></Tool>
              <Tool $w={24}><LetterTool $style="italic 14px">I</LetterTool></Tool>
              <Tool $w={23}><LetterTool $style="14px" $under>U</LetterTool></Tool>
              <Caret $w={14} />
              <VSep $ml={4} />
              <Tool $w={30}><BordersIcon /></Tool>
              <Caret $w={9} />
              <VSep $ml={6} />
              <Tool $w={30}><FillIcon /></Tool>
              <Caret />
              <Tool $w={30}><FontColorIcon /></Tool>
              <Caret />
            </ToolRow>
          </TwoRows>
        </GroupBody>
        <GroupLabel $pr={19}>Font</GroupLabel>
        <Launcher><Launch /></Launcher>
      </Group>

      <Group $w={295}>
        <GroupBody $pl={8}>
          <TwoRows>
            <ToolRow>
              <Tool $w={24}><LinesIcon lines={[[0, 16, 2], [2, 14, 6], [0, 16, 10]]} /></Tool>
              <Tool $w={24} $on><LinesIcon lines={[[0, 16, 5], [2, 14, 9], [0, 16, 13]]} /></Tool>
              <Tool $w={24}><LinesIcon lines={[[0, 16, 10], [2, 14, 14], [0, 16, 18]]} /></Tool>
              <VSep $ml={4} />
              <Tool $w={28} $ml={2}><OrientIcon /></Tool>
              <Caret $w={6} />
              <VSep $ml={20} />
              <WrapButton><WrapIcon />Wrap Text</WrapButton>
            </ToolRow>
            <ToolRow>
              <Tool $w={24}><LinesIcon lines={[[0, 16, 3], [0, 10, 7], [0, 16, 11], [0, 10, 15]]} /></Tool>
              <Tool $w={24} $on><LinesIcon lines={[[0, 16, 3], [3, 13, 7], [0, 16, 11], [3, 13, 15]]} /></Tool>
              <Tool $w={24}><LinesIcon lines={[[0, 16, 3], [6, 16, 7], [0, 16, 11], [6, 16, 15]]} /></Tool>
              <VSep $ml={4} />
              <Tool $w={24} $ml={4}><IndentIcon /></Tool>
              <Tool $w={24}><IndentIcon flip /></Tool>
              <VSep $ml={4} />
              <MergeButton><MergeIcon />Merge &amp; Center<Caret $ml={7} /></MergeButton>
            </ToolRow>
          </TwoRows>
        </GroupBody>
        <GroupLabel $pr={19}>Alignment</GroupLabel>
        <Launcher><Launch /></Launcher>
      </Group>

      <Group $w={158}>
        <GroupBody $pl={8}>
          <TwoRows>
            <ToolRow><Combo $w={142}>Number<Caret /></Combo></ToolRow>
            <ToolRow>
              <Tool $w={22}><LetterTool $style="21px">$</LetterTool></Tool>
              <Caret $w={15} />
              <Tool $w={24}><LetterTool $style="22px">%</LetterTool></Tool>
              <Tool $w={24}><CommaIcon /></Tool>
              <VSep $ml={4} />
              <Tool $w={30}><Decimal top="0" bottom=".00" /></Tool>
              <Tool $w={18}><Decimal top=".00" bottom="0" toRight /></Tool>
            </ToolRow>
          </TwoRows>
        </GroupBody>
        <GroupLabel $pr={18}>Number</GroupLabel>
        <Launcher><Launch /></Launcher>
      </Group>

      <Group $w={208}>
        <GroupBody $pl={7}>
          <LargeButton $w={80}>
            <LargeIcon $pt={7}><CondIcon /></LargeIcon>
            <LabelLine>Conditional</LabelLine>
            <LabelLine>Formatting<Caret /></LabelLine>
          </LargeButton>
          <LargeButton $w={64}>
            <LargeIcon $pt={7}><TableIcon /></LargeIcon>
            <LabelLine>Format as</LabelLine>
            <LabelLine>Table<Caret /></LabelLine>
          </LargeButton>
          <LargeButton $w={50}>
            <LargeIcon $pt={7}><StylesIcon /></LargeIcon>
            <LabelLine>Cell</LabelLine>
            <LabelLine>Styles<Caret /></LabelLine>
          </LargeButton>
        </GroupBody>
        <GroupLabel>Styles</GroupLabel>
      </Group>

      <Group $w={153}>
        <GroupBody $pl={7}>
          <LargeButton $w={46}>
            <LargeIcon $pt={7}><InsertIcon /></LargeIcon>
            <LabelLine>Insert</LabelLine>
            <LabelLine><Caret /></LabelLine>
          </LargeButton>
          <LargeButton $w={45}>
            <LargeIcon $pt={7}><DeleteIcon /></LargeIcon>
            <LabelLine>Delete</LabelLine>
            <LabelLine><Caret /></LabelLine>
          </LargeButton>
          <LargeButton $w={46}>
            <LargeIcon $pt={1}><FormatIcon /></LargeIcon>
            <LabelLine>Format</LabelLine>
            <LabelLine><Caret /></LabelLine>
          </LargeButton>
        </GroupBody>
        <GroupLabel>Cells</GroupLabel>
      </Group>

      <Group $w={209}>
        <GroupBody $pl={11}>
          <SmallColumn $w={91}>
            <SmallRow><Tool $w={18}><SumIcon /></Tool>AutoSum<Caret $ml={9} /></SmallRow>
            <SmallRow><Tool $w={18}><FillDownIcon /></Tool>Fill<Caret $ml={-1} /></SmallRow>
            <SmallRow><Tool $w={18}><EraserIcon /></Tool>Clear<Caret $ml={-1} /></SmallRow>
          </SmallColumn>
          <LargeButton $w={50}>
            <LargeIcon $pt={4}><SortIcon /></LargeIcon>
            <LabelLine>Sort &amp;</LabelLine>
            <LabelLine>Filter<Caret /></LabelLine>
          </LargeButton>
          <LargeButton $w={50}>
            <LargeIcon $pt={4}><FindIcon /></LargeIcon>
            <LabelLine>Find &amp;</LabelLine>
            <LabelLine>Select<Caret /></LabelLine>
          </LargeButton>
        </GroupBody>
        <GroupLabel>Editing</GroupLabel>
      </Group>
      <Collapse><ChevronUp /></Collapse>
    </Ribbon>
  )
}

function Formula() {
  return (
    <FormulaBar>
      <FormulaBox $w={112} $pl={6} $pr={6}>A9<Caret /></FormulaBox>
      <Grip />
      <FormulaBox $w={118} $ml={16} $pl={14} $pr={13}>
        <svg width="11" height="11" viewBox="0 0 11 11" stroke="#c4c4c4" strokeWidth="1.5"><path d="M1 1l9 9M10 1l-9 9" /></svg>
        <svg width="14" height="11" viewBox="0 0 14 11" fill="none" stroke="#c4c4c4" strokeWidth="2"><path d="M1 6l4 4 8-9" /></svg>
        <svg width="14" height="14" viewBox="0 0 14 14">
          <text x="0" y="11" fontFamily={`"Liberation Serif", serif`} fontStyle="italic" fontSize="13" fill="#707070">fx</text>
        </svg>
      </FormulaBox>
      <FormulaBox $ml={4} $pl={11} $pr={3}>1<SmallDown /></FormulaBox>
    </FormulaBar>
  )
}

function SheetBody() {
  return (
    <Rows>
      <Row $h={2}><RowHead>1</RowHead></Row>
      <Row $h={29}>
        <RowHead $lift={2}>2</RowHead>
        <MetaLabel $span="2 / 4" $pr={0}>COMPETITION:</MetaLabel>
        <MetaValue $span="4 / 10" $pl={3} $bold>Spring Equinox Open</MetaValue>
      </Row>
      <Row $h={21}>
        <RowHead>3</RowHead>
        <MetaLabel $span="2 / 4" $pr={3}>SITE:</MetaLabel>
        <MetaValue $span="4 / 6">West-End Gym</MetaValue>
        <MetaLabel $span="6 / 8" $pr={2}>CITY:</MetaLabel>
        <MetaValue $span="8 / 10">Sometown, Lower FOPState</MetaValue>
      </Row>
      <Row $h={20}>
        <RowHead>4</RowHead>
        <MetaLabel $span="2 / 4" $pr={3}>DATE:</MetaLabel>
        <MetaValue $span="4 / 5">2019-03-23</MetaValue>
      </Row>
      <Row $h={63}>
        <RowHead $lift={3}>5</RowHead>
        <TitleCell>Start List - Liste de départ</TitleCell>
      </Row>
      <Row $h={22} $open>
        <RowHead>6</RowHead>
        <div />
        {columnTitles.map((title, i) => <ColumnTitle key={title} $first={i === 0}>{title}</ColumnTitle>)}
      </Row>
      <Row $h={11}>
        <RowHead>7</RowHead>
        <RowFill $span="2 / 10" />
      </Row>
      <Row $h={32}>
        <RowHead>8</RowHead>
        <GroupBand>
          <GroupName>Group M1</GroupName>
          <GroupTimes>
            <span>Weigh-in : 2019-07-29 09:56</span>
            <span>Start :  2019-07-29 11:56</span>
          </GroupTimes>
        </GroupBand>
      </Row>
      {lifters.map(([order, lot, last, first, team, born, cat, total], i) => (
        <Row key={order} $h={27}>
          <RowHead>{i + 9}</RowHead>
          <OrderCell>{order}</OrderCell>
          <Cell>{lot}</Cell>
          <Cell $left>{last}</Cell>
          <Cell $left>{first}</Cell>
          <Cell>{team}</Cell>
          <DateCell>{born}</DateCell>
          <MonoCell>{cat}</MonoCell>
          <MonoCell>{total}</MonoCell>
        </Row>
      ))}
      <Row $h={27}>
        <RowHead>23</RowHead>
        <OrderCell />
        <Cell /><Cell /><Cell /><Cell /><Cell /><Cell /><Cell />
      </Row>
    </Rows>
  )
}

export default function App() {
  return (
    <>
      <GlobalStyle />
      <Window>
        <TitleStrip />
        <RibbonTabs />
        <RibbonGroups />
        <Formula />
        <SheetArea>
          <Sheet>
            <HeaderRow>
              <Corner>
                <svg width="11" height="11" viewBox="0 0 11 11" fill="#b4b4b4"><path d="M11 0v11H0z" /></svg>
              </Corner>
              {colLetters.map((letter) => <ColHead key={letter}>{letter}</ColHead>)}
              <ColHead $last />
            </HeaderRow>
            <SheetBody />
          </Sheet>
          <VScroll>
            <ScrollBtn><ScrollArrow d="M4.5 0L9 4H0z" /></ScrollBtn>
            <VThumb />
            <VTrack />
            <ScrollBtn><ScrollArrow d="M0 0h9L4.5 4z" /></ScrollBtn>
          </VScroll>
        </SheetArea>
        <SheetTabs>
          <NavArrows>
            <SideArrow flip color="#c4c4c4" />
            <SideArrow color="#c4c4c4" />
          </NavArrows>
          <ActiveTab>Start List</ActiveTab>
          <IdleTab>Team List</IdleTab>
          <AddSheet>
            <svg width="16" height="16" viewBox="0 0 16 16" fill="none" stroke="#808080"><circle cx="8" cy="8" r="7.3" /><path d="M8 4v8M4 8h8" strokeWidth="1.6" /></svg>
          </AddSheet>
          <Dots />
          <HScroll>
            <ScrollBtn $w={16} $h={17}><SideArrow flip /></ScrollBtn>
            <HThumb />
            <HTrack />
            <ScrollBtn $w={17} $h={17}><SideArrow /></ScrollBtn>
          </HScroll>
        </SheetTabs>
        <StatusBar>
          <ViewBtn $on>
            <svg width="13" height="12" viewBox="0 0 13 12" fill="none" stroke="#707070"><path d="M.5.5h12v11H.5zM4.5.5v11M8.5.5v11M.5 4h12M.5 8h12" /></svg>
          </ViewBtn>
          <ViewBtn>
            <svg width="14" height="13" viewBox="0 0 14 13" fill="none" stroke="#707070"><path d="M.5.5h13v12H.5zM3.5 3.5h7v6h-7zM5 5.5h4M5 7.5h4" /></svg>
          </ViewBtn>
          <ViewBtn>
            <svg width="14" height="12" viewBox="0 0 14 12" fill="none" stroke="#707070"><path d="M.5.5h13v11H.5zM5.5.5v6h4v-6" /></svg>
          </ViewBtn>
          <svg width="7" height="2" viewBox="0 0 7 2" fill="#666" style={{ marginLeft: 6 }}><path d="M0 0h7v2H0z" /></svg>
          <ZoomSlider />
          <svg width="7" height="7" viewBox="0 0 7 7" fill="#666"><path d="M0 2.5h7v2H0zM2.5 0h2v7h-2z" /></svg>
          <ZoomText>100%</ZoomText>
        </StatusBar>
        <CellCursor width="16" height="16" viewBox="0 0 16 16">
          <path d="M5.5 1.5h5v4h4v5h-4v4h-5v-4h-4v-5h4z" fill="#fff" stroke="#000" />
        </CellCursor>
      </Window>
    </>
  )
}
